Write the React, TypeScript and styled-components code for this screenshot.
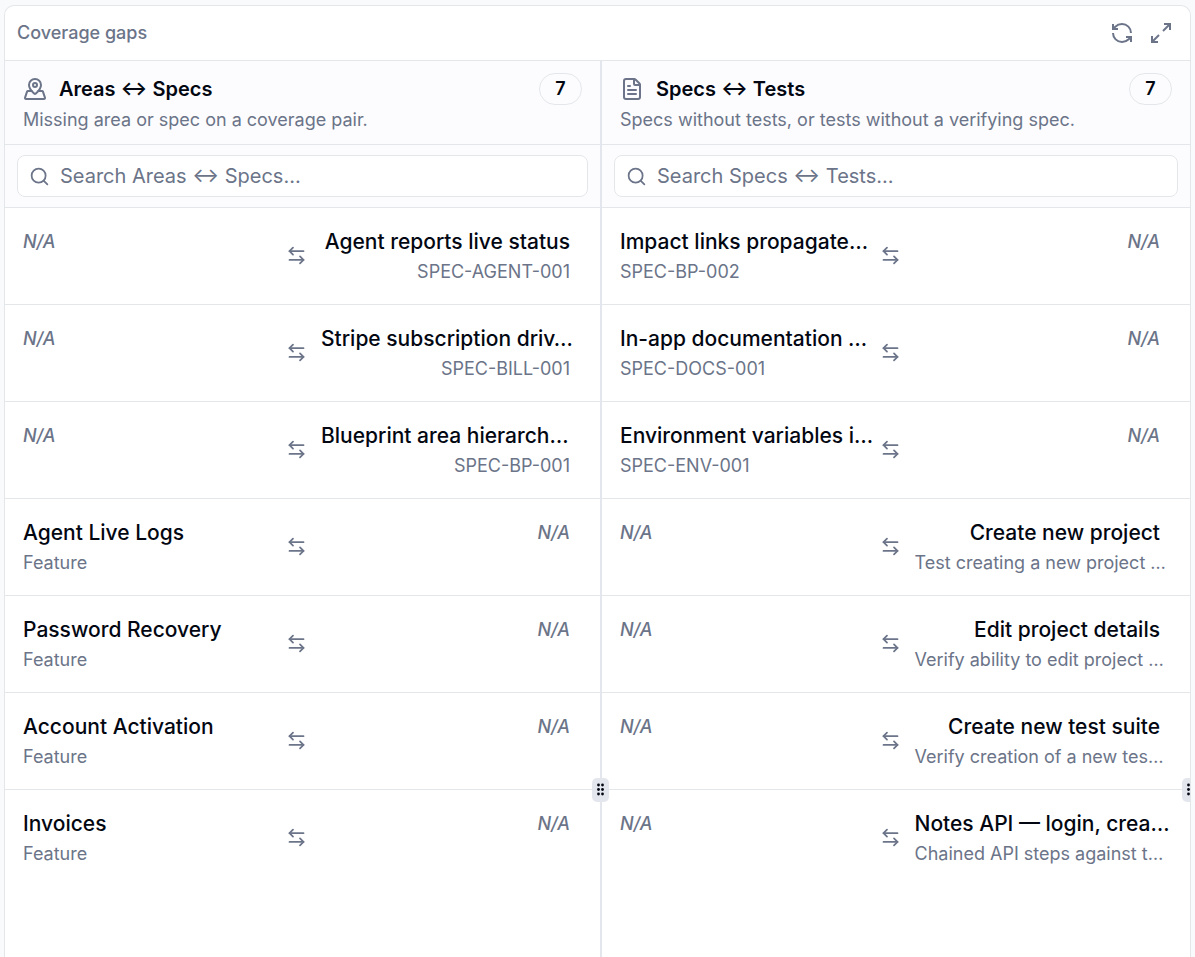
import React from "react";
import styled, { createGlobalStyle } from "styled-components";
import {
  ArrowLeftRight,
  FileText,
  MapPinned,
  Maximize2,
  RefreshCcw,
  Search,
} from "lucide-react";

const color = {
  page: "#f9fafb",
  tint: "#fcfcfe",
  surface: "#ffffff",
  border: "#e4e7ea",
  divider: "#e3e6ed",
  muted: "#6b7488",
  text: "#030712",
};

const GlobalStyle = createGlobalStyle`
  *, *::before, *::after { box-sizing: border-box; }
  body {
    margin: 0;
    background: ${color.page};
    color: ${color.text};
    font-family: Inter, "Liberation Sans", sans-serif;
  }
`;

const Page = styled.main`
  height: 100vh;
  padding: 5px 4px 0;
  overflow: hidden;
`;

const Panel = styled.section`
  display: flex;
  flex-direction: column;
  height: 100%;
  background: ${color.surface};
  border: 1px solid ${color.border};
  border-bottom: 0;
  border-radius: 10px 10px 0 0;
  overflow: hidden;
`;

const PanelHeader = styled.header`
  display: flex;
  align-items: center;
  justify-content: space-between;
  height: 55px;
  flex: none;
  padding: 0 17px 0 12px;
  border-bottom: 1px solid ${color.border};
`;

const PanelTitle = styled.h1`
  margin: 0;
  font-size: 18px;
  font-weight: 500;
  line-height: 24px;
  color: ${color.muted};
`;

const Actions = styled.div`
  display: flex;
  gap: 15px;
`;

const IconButton = styled.button`
  display: flex;
  padding: 0;
  border: 0;
  background: none;
  color: ${color.muted};
  cursor: pointer;
`;

const Columns = styled.div`
  display: grid;
  grid-template-columns: 595fr 2px 588fr 0;
  flex: 1;
  min-height: 0;
`;

const Column = styled.section`
  min-width: 0;
`;

const ColumnHeader = styled.header`
  height: 84px;
  padding: 12px 18px 0;
  background: ${color.tint};
  border-bottom: 1px solid ${color.border};
`;

const HeadingRow = styled.div`
  display: flex;
  align-items: center;
  gap: 12px;
  color: ${color.muted};
`;

const Heading = styled.h2`
  flex: 1;
  margin: 0;
  font-size: 20px;
  font-weight: 600;
  line-height: 32px;
  color: ${color.text};
`;

const Count = styled.span`
  width: 43px;
  border: 1px solid ${color.border};
  border-radius: 16px;
  font-size: 18px;
  font-weight: 600;
  line-height: 30px;
  text-align: center;
  color: ${color.text};
`;

const Description = styled.p`
  margin: 3px 0 0;
  font-size: 18px;
  line-height: 24px;
  color: ${color.muted};
  white-space: nowrap;
`;

const SearchBar = styled.div`
  padding: 10px 12px;
  background: ${color.tint};
  border-bottom: 1px solid ${color.border};
`;

const SearchField = styled.label`
  display: flex;
  align-items: center;
  gap: 10px;
  height: 42px;
  padding: 0 11px;
  background: ${color.surface};
  border: 1px solid ${color.border};
  border-radius: 8px;
  color: ${color.muted};
`;

const SearchInput = styled.input`
  flex: 1;
  min-width: 0;
  padding: 0;
  border: 0;
  outline: 0;
  background: none;
  font: inherit;
  font-size: 20px;
  line-height: 28px;
  color: ${color.text};
  &::placeholder {
    color: ${color.muted};
    opacity: 1;
  }
`;

const List = styled.ul`
  margin: 0;
  padding: 0;
  list-style: none;
`;

const Row = styled.li`
  display: grid;
  grid-template-columns: minmax(0, 1fr) 21px minmax(0, 1fr);
  column-gap: 14px;
  height: 97px;
  padding: 18px 30px 0 18px;
  border-bottom: 1px solid ${color.border};
  color: ${color.muted};
  &:last-child {
    border-bottom: 0;
  }
  > svg {
    margin-top: 19px;
  }
`;

const Side = styled.div<{ $end?: boolean }>`
  text-align: ${(p) => (p.$end ? "right" : "left")};
`;

const ItemTitle = styled.div<{ $clipped: boolean }>`
  font-size: 21px;
  font-weight: 500;
  line-height: 32px;
  white-space: nowrap;
  color: ${color.text};
  ${(p) => p.$clipped && "text-align: left;"}
`;

const ItemMeta = styled.div<{ $clipped: boolean }>`
  font-size: 18px;
  line-height: 28px;
  white-space: nowrap;
  ${(p) => p.$clipped && "text-align: left;"}
`;

const Missing = styled.em`
  font-size: 18px;
  font-weight: 500;
  line-height: 32px;
`;

const Divider = styled.div`
  position: relative;
  background: ${color.divider};
`;

const Handle = styled.button`
  position: absolute;
  top: 80%;
  left: -8px;
  display: flex;
  align-items: center;
  justify-content: center;
  width: 17px;
  height: 24px;
  padding: 0;
  border: 0;
  border-radius: 5px;
  background: ${color.divider};
  color: ${color.text};
  cursor: col-resize;
`;

type Item = { title: string; meta: string } | null;

const areaSpecs: [Item, Item][] = [
  [null, { title: "Agent reports live status", meta: "SPEC-AGENT-001" }],
  [null, { title: "Stripe subscription driv…", meta: "SPEC-BILL-001" }],
  [null, { title: "Blueprint area hierarch…", meta: "SPEC-BP-001" }],
  [{ title: "Agent Live Logs", meta: "Feature" }, null],
  [{ title: "Password Recovery", meta: "Feature" }, null],
  [{ title: "Account Activation", meta: "Feature" }, null],
  [{ title: "Invoices", meta: "Feature" }, null],
];

const specTests: [Item, Item][] = [
  [{ title: "Impact links propagate…", meta: "SPEC-BP-002" }, null],
  [{ title: "In-app documentation …", meta: "SPEC-DOCS-001" }, null],
  [{ title: "Environment variables i…", meta: "SPEC-ENV-001" }, null],
  [null, { title: "Create new project", meta: "Test creating a new project …" }],
  [null, { title: "Edit project details", meta: "Verify ability to edit project …" }],
  [null, { title: "Create new test suite", meta: "Verify creation of a new tes…" }],
  [null, { title: "Notes API — login, crea…", meta: "Chained API steps against t…" }],
];

function Cell({ item, end }: { item: Item; end?: boolean }) {
  return (
    <Side $end={end}>
      {item ? (
        <>
          <ItemTitle $clipped={item.title.endsWith("…")}>{item.title}</ItemTitle>
          <ItemMeta $clipped={item.meta.endsWith("…")}>{item.meta}</ItemMeta>
        </>
      ) : (
        <Missing>N/A</Missing>
      )}
    </Side>
  );
}

function GapColumn(props: {
  icon: React.ReactNode;
  title: string;
  description: string;
  rows: [Item, Item][];
}) {
  return (
    <Column>
      <ColumnHeader>
        <HeadingRow>
          {props.icon}
          <Heading>{props.title}</Heading>
          <Count>{props.rows.length}</Count>
        </HeadingRow>
        <Description>{props.description}</Description>
      </ColumnHeader>
      <SearchBar>
        <SearchField>
          <Search size={21} strokeWidth={2} aria-hidden />
          <SearchInput
            type="text"
            aria-label={`Search ${props.title}`}
            placeholder={`Search ${props.title}…`}
          />
        </SearchField>
      </SearchBar>
      <List>
        {props.rows.map(([left, right], i) => (
          <Row key={i}>
            <Cell item={left} />
            <ArrowLeftRight size={21} strokeWidth={2} aria-hidden />
            <Cell item={right} end />
          </Row>
        ))}
      </List>
    </Column>
  );
}

function ResizeHandle() {
  return (
    <Divider>
      <Handle aria-label="Resize column">
        <svg width="9" height="13" viewBox="0 0 9 13" fill="currentColor" aria-hidden>
          {[2, 6.5, 11].map((y) => (
            <React.Fragment key={y}>
              <circle cx="2.5" cy={y} r="1.4" />
              <circle cx="6.5" cy={y} r="1.4" />
            </React.Fragment>
          ))}
        </svg>
      </Handle>
    </Divider>
  );
}

export default function App() {
  return (
    <Page>
      <GlobalStyle />
      <Panel>
        <PanelHeader>
          <PanelTitle>Coverage gaps</PanelTitle>
          <Actions>
            <IconButton aria-label="Refresh">
              <RefreshCcw size={24} strokeLinecap="butt" strokeLinejoin="miter" />
            </IconButton>
            <IconButton aria-label="Expand">
              <Maximize2 size={24} strokeLinecap="butt" strokeLinejoin="miter" />
            </IconButton>
          </Actions>
        </PanelHeader>
        <Columns>
          <GapColumn
            icon={<MapPinned size={24} />}
            title="Areas ↔ Specs"
            description="Missing area or spec on a coverage pair."
            rows={areaSpecs}
          />
          <ResizeHandle />
          <GapColumn
            icon={<FileText size={24} />}
            title="Specs ↔ Tests"
            description="Specs without tests, or tests without a verifying spec."
            rows={specTests}
          />
          <ResizeHandle />
        </Columns>
      </Panel>
    </Page>
  );
}
